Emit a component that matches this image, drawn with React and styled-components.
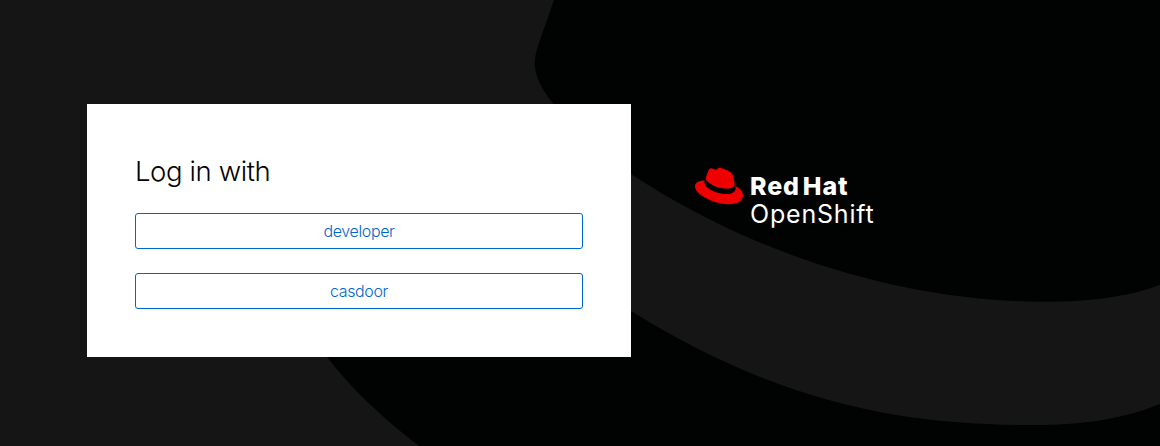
import React from "react";
import styled, { createGlobalStyle } from "styled-components";

const GlobalStyle = createGlobalStyle`
  *, *::before, *::after { box-sizing: border-box; }
  body { margin: 0; background: #151515; font-family: Inter, "Noto Sans", sans-serif; }
`;

const Page = styled.div`
  position: relative;
  height: 446px;
  overflow: hidden;
  background: #151515;
`;

const Backdrop = styled.svg`
  position: absolute;
  inset: 0;
  width: 1160px;
  height: 446px;
`;

const Layout = styled.div`
  position: relative;
  display: grid;
  grid-template-columns: 544px auto;
  justify-content: start;
  align-items: start;
  column-gap: 64px;
  padding: 104px 0 0 87px;
`;

const Card = styled.main`
  height: 253px;
  padding: 48px;
  background: #fff;
`;

const Title = styled.h1`
  margin: 0 0 22px;
  height: 39px;
  line-height: 38px;
  font-size: 27.5px;
  font-weight: 300;
  letter-spacing: -0.4px;
  white-space: nowrap;
  color: #030303;
`;

const ProviderList = styled.div`
  display: flex;
  flex-direction: column;
  gap: 24px;
`;

const ProviderButton = styled.button`
  height: 36px;
  padding: 0;
  border: 1px solid #06c;
  border-radius: 3px;
  background: transparent;
  color: #06c;
  font: 350 16px/24px Inter, "Noto Sans", sans-serif;
  letter-spacing: -0.38px;
`;

const Brand = styled.div`
  display: flex;
  align-items: flex-start;
  gap: 7px;
  padding-top: 58px;
  color: #fff;
`;

const Hat = styled.svg`
  width: 48px;
  height: 48px;
  fill: #e00;
`;

const Wordmark = styled.div`
  display: flex;
  flex-direction: column;
  padding-top: 11px;
`;

const WordLine = styled.span`
  height: 27px;
  line-height: ${({ $bold }) => ($bold ? "27px" : "28px")};
  font-size: 25px;
  white-space: nowrap;
  font-weight: ${({ $bold }) => ($bold ? 800 : 400)};
  letter-spacing: ${({ $bold }) => ($bold ? "0.9px" : "0.8px")};
  word-spacing: ${({ $bold }) => ($bold ? "-3.5px" : "0")};
`;

export default function App() {
  return (
    <Page>
      <GlobalStyle />
      <Backdrop viewBox="0 0 1160 446" fill="#010302" aria-hidden="true">
        <path d="M554 0L538 46C534 59 533.5 65 537 76C540.5 87 547 96 554 104.5C570 126 596 150 631 174C761 259.8 913 301.7 1043 301.7C1095 301.7 1130 296 1160 284.7V0Z" />
        <path d="M327 357C350 387 380 416 419 446H1160V404C1125 418 1088 425 1033 425C903 425 781 404 631 311L500 220H280Z" />
      </Backdrop>
      <Layout>
        <Card>
          <Title>Log in with</Title>
          <ProviderList>
            <ProviderButton type="button">developer</ProviderButton>
            <ProviderButton type="button">casdoor</ProviderButton>
          </ProviderList>
        </Card>
        <Brand>
          <Hat viewBox="0 0 24 24" aria-hidden="true">
            <path d="M16.009 13.386c1.577 0 3.86-.326 3.86-2.202a1.765 1.765 0 0 0-.04-.431l-.94-4.08c-.216-.898-.406-1.305-1.982-2.093-1.223-.625-3.888-1.658-4.676-1.658-.733 0-.947.946-1.822.946-.842 0-1.467-.706-2.255-.706-.757 0-1.25.515-1.63 1.576 0 0-1.06 2.99-1.197 3.424a.81.81 0 0 0-.028.245c0 1.162 4.577 4.974 10.71 4.974m4.101-1.435c.218 1.032.218 1.14.218 1.277 0 1.765-1.984 2.745-4.593 2.745-5.895.004-11.06-3.451-11.06-5.734a2.326 2.326 0 0 1 .19-.925C2.746 9.415 0 9.794 0 12.217c0 3.969 9.405 8.861 16.851 8.861 5.71 0 7.149-2.582 7.149-4.62 0-1.605-1.387-3.425-3.887-4.512" />
          </Hat>
          <Wordmark>
            <WordLine $bold>Red Hat</WordLine>
            <WordLine>OpenShift</WordLine>
          </Wordmark>
        </Brand>
      </Layout>
    </Page>
  );
}
